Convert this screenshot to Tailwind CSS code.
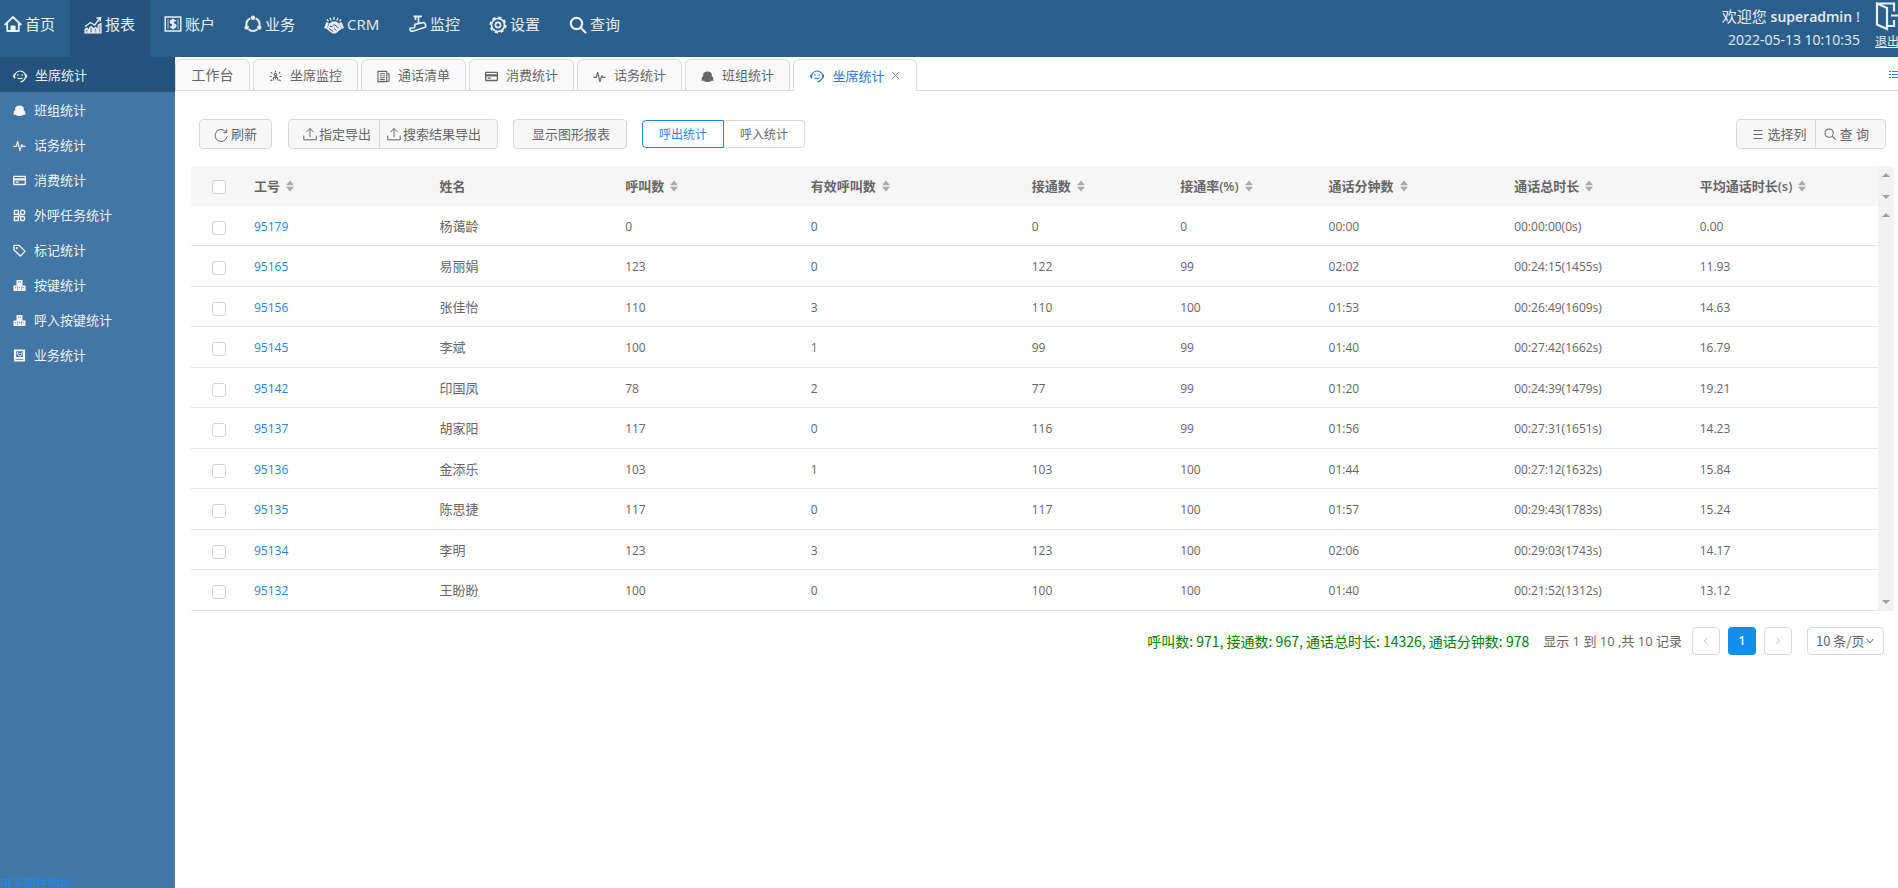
<!DOCTYPE html>
<html lang="zh-CN">
<head>
<meta charset="utf-8">
<meta name="viewport" content="width=device-width, initial-scale=1">
<title>坐席统计</title>
<script src="https://cdn.jsdelivr.net/npm/@tailwindcss/browser@4"></script>
</head>
<body class="h-screen flex flex-col overflow-hidden bg-white text-[13px] leading-5 text-[#666] font-['Open_Sans','Noto_Sans_CJK_SC',sans-serif]">

<svg class="hidden" aria-hidden="true">
  <defs>
    <symbol id="home" viewBox="0 0 18 18" fill="none" stroke="currentColor" stroke-width="1.8" stroke-linejoin="round" stroke-linecap="round"><path d="M1.2 9.500 9 2l7.800 7.500M3.200 8v8h11.600V8"/><path d="M7.300 16v-4.500h3.400V16" fill="currentColor"/></symbol>
    <symbol id="chart" viewBox="0 0 18 18" fill="none" stroke="currentColor"><path d="M1 17v-3.500l1.700-1.500 1.600 1.500V17zM5.500 17v-5l1.700-1.500L8.800 12v5zM10 17v-4.500l1.500-1 1.500 1V17zM14.200 17V9l2.800-1.500V17z" stroke-width="1.200" fill="currentColor" fill-opacity=".55"/><path d="m1 10.500 5.500-4 4.200 2.500 5-6.500M12.500 2.200l4-.7-.3 4" stroke-width="1.400"/></symbol>
    <symbol id="account" viewBox="0 0 18 18" fill="none" stroke="currentColor"><rect x="1.200" y="2" width="15.600" height="14" stroke-width="1.500"/><path d="M4 4v10M14 4v10" stroke-width=".7"/><path d="M11.500 6.300C10.800 4.800 6.600 4.800 6.600 7c0 2.400 5 1.300 5 3.800 0 2.400-4.400 2.200-5.100.5M9 3.800v10.400" stroke-width="1.900"/></symbol>
    <symbol id="ring" viewBox="0 0 18 18" fill="none" stroke="currentColor"><path d="M6.300 3.500a6.600 6.600 0 0 0-3.800 7M4.600 14.300a6.800 6.800 0 0 0 8.800 0M15.500 10.500a6.600 6.600 0 0 0-3.800-7" stroke-width="2"/><g fill="currentColor" stroke="none"><circle cx="9" cy="2.700" r="2.200"/><circle cx="2.700" cy="12.500" r="2.200"/><circle cx="15.300" cy="12.500" r="2.200"/></g></symbol>
    <symbol id="hands" viewBox="0 0 20 18" fill="currentColor"><path d="m0 12 2.500-6 2.300 1L2.600 13zM20 12l-2.500-6-2.300 1 2.200 6zM5.300 7.500 8.500 5.500h3.500l3 2 2.200 5.500-5 4q-2.200 1.200-4.400 0l-5-4z"/><path d="M10 .8v3M6 1.800l1.200 2.600M14 1.800l-1.200 2.600M2.800 3.500l1.700 1.800M17.200 3.500l-1.700 1.800" stroke="currentColor" stroke-width="1.300"/><path d="M6 10.500q2 1 3.800-1.600 1.300-.6 4.900 3.400M5 12.500l4.300 3M10 12.500l2.500 2" fill="none" stroke="#2b5f8b" stroke-width="1"/></symbol>
    <symbol id="camera" viewBox="0 0 18 18" fill="none" stroke="currentColor" stroke-width="1.700" stroke-linejoin="round"><path d="M4.500 1.300h8.500M9.500 1.500v7M6.500 1.500v3.500M5.500 9.300 15 7.500q2 1 1.700 4.500L4 16.200H2.200q-1.600-1.200-1-3.200h3.600q1.700-1 .7-3.700"/></symbol>
    <symbol id="gear" viewBox="0 0 18 18" fill="none" stroke="currentColor"><circle cx="9" cy="9" r="6.500" stroke-width="1.700"/><circle cx="9" cy="9" r="7.800" stroke-width="1.600" stroke-dasharray="3.200 2.926"/><circle cx="9" cy="9" r="2.600" stroke-width="1.700"/></symbol>
    <symbol id="search" viewBox="0 0 18 18" fill="none" stroke="currentColor" stroke-width="2.200" stroke-linecap="round"><circle cx="7.500" cy="7.500" r="5.700"/><path d="m12 12 4.500 4.500"/></symbol>
    <symbol id="agent" viewBox="0 0 14 14" fill="none" stroke="currentColor" stroke-width="1.100"><path d="M2 9.200A5.400 5.400 0 1 1 12.200 9q-.9 3-4.700 4M1.900 5.200Q.6 5.500.6 7.100T2 9.200M12.300 5.200q1.200.3 1.200 1.900T12.200 9.200"/><path d="M4.500 8.700Q7 10.700 9.500 8.700"/><path d="M4.800 5.200v1.500M9.200 5.200v1.500" stroke-width="1.300"/></symbol>
    <symbol id="group" viewBox="0 0 14 14" fill="currentColor"><path d="M3.200 3Q4.500 1.500 7 1.500T10.800 3q1.500 1 .7 3.200 2 1.200 2 5.300h-2.200Q9.800 13 7 13t-4.300-1.500H.5q0-4.100 2-5.300Q1.700 4 3.200 3"/></symbol>
    <symbol id="pulse" viewBox="0 0 14 14" fill="none" stroke="currentColor" stroke-width="1.300" stroke-linejoin="round"><path d="M.5 8h3l1.500-5.500 2.500 10L9.500 6l1 2h3"/></symbol>
    <symbol id="card" viewBox="0 0 14 14"><path fill="currentColor" fill-rule="evenodd" d="M1.200 2h11.600q1.200 0 1.200 1.200v7.600q0 1.200-1.200 1.200H1.200Q0 12 0 10.800V3.200Q0 2 1.200 2m.2 1.200v1.300h11.200V3.200zM1.400 7v3.600h11.200V7zM2.800 8.200h3.400v1.200H2.800z"/></symbol>
    <symbol id="blocks" viewBox="0 0 14 14" fill="none" stroke="currentColor" stroke-width="1.500"><rect x="1.500" y="1.500" width="4.200" height="4.200"/><circle cx="10.300" cy="3.700" r="2.300"/><rect x="1.500" y="8.200" width="4.200" height="4.200"/><rect x="8.200" y="8.200" width="4.200" height="4.200" rx="1"/><path d="M5.500 5.500 8.500 8.500"/></symbol>
    <symbol id="tag" viewBox="0 0 14 14" fill="none" stroke="currentColor" stroke-width="1.400" stroke-linejoin="round"><path d="M1 1.500h5.500l6.500 6.200-5 5.300L1 6.500z"/><circle cx="4" cy="4.400" r=".5"/></symbol>
    <symbol id="keys" viewBox="0 0 14 14" fill="currentColor"><path fill-rule="evenodd" d="M3.800 1h6.400v6h3.300v5.800H.5V7h3.300zM5.500 2.800v1.100h1V2.800zM7.500 2.800v1.100h1V2.800zM2.300 8.800v1.100h1.200V8.800zM6.300 8.800v1.100h1.400V8.800zM10.300 8.800v1.100h1.200V8.800zM4.600 7.500v4.500h.5V7.500zM9 7.500v4.500h.5V7.500z"/></symbol>
    <symbol id="book" viewBox="0 0 14 14"><path fill="currentColor" fill-rule="evenodd" d="M1 .5h12v13H1zM3.500 2.300v6.400h7V2.300zM2.800 10.700v1h8.400v-1z"/><path d="M5 3.500v2l1.500 2h2l1-2v-2M6.200 4.800h1.600" stroke="currentColor" fill="none"/></symbol>
    <symbol id="watch" viewBox="0 0 14 14" fill="none" stroke="currentColor" stroke-width="1.200"><circle cx="7" cy="4.800" r="1.300"/><path d="M4.300 11.500 5 8.500 7 7l2 1.500.7 3M7 7v3M7 .8v1.500M2 2.300l1.500 1.400M12 2.300l-1.500 1.400M.6 7h2.200M11.200 7h2.200M1.500 11.800 3 10.500M12.500 11.800 11 10.500"/></symbol>
    <symbol id="list" viewBox="0 0 14 14" fill="none" stroke="currentColor" stroke-width="1.200"><path d="M1 1.500h9.500v11H1zM10.500 4h2.500v7q0 1.500-2.500 1.500"/><path d="M3 4h5.500M3 6.200h2.500M6.500 6.200h2M3 8.300h5.500M3 10.400h5.500"/></symbol>
    <symbol id="reload" viewBox="0 0 14 14" fill="none" stroke="currentColor" stroke-width="1"><path d="M12.300 4.500A6 6 0 1 0 13 8.500M12.700 1.200v3.500H9.300"/></symbol>
    <symbol id="upload" viewBox="0 0 14 14" fill="none" stroke="currentColor" stroke-width="1"><path d="M.8 8.500v4.300h12.400V8.500M7 10V1.500M3.500 5 7 1.500 10.500 5"/></symbol>
    <symbol id="find" viewBox="0 0 14 14" fill="none" stroke="currentColor" stroke-width="1.200"><circle cx="6" cy="6" r="4.800"/><path d="m9.500 9.500 4 4"/></symbol>
    <symbol id="lines" viewBox="0 0 12 12" fill="none" stroke="currentColor"><path d="M1.500 2.500h9M1.500 6.500h9M1.500 10.500h9"/></symbol>
    <symbol id="sort" viewBox="0 0 8 14" fill="#aaa"><path d="M4 1.500 8 6.200H0zM4 12.500 8 7.800H0z"/></symbol>
    <symbol id="up" viewBox="0 0 8 4" fill="#a0a0a0"><path d="M4 0 8 4H0z"/></symbol>
    <symbol id="down" viewBox="0 0 8 4" fill="#a0a0a0"><path d="M4 4 0 0h8z"/></symbol>
  </defs>
</svg>

<header class="h-[57px] shrink-0 flex bg-[#2b5f8b] text-white/90 text-[15px] overflow-hidden">
  <nav class="flex flex-1 leading-6">
    <a href="#" class="w-[70px] pl-1 pt-3 flex items-start gap-[3px]"><svg class="size-[18px] mt-[3px]"><use href="#home"/></svg>首页</a>
    <a href="#" class="w-20 pl-[14px] pt-3 flex items-start gap-[3px] bg-[#23527c]"><svg class="size-[18px] mt-1"><use href="#chart"/></svg>报表</a>
    <a href="#" class="w-20 pl-[14px] pt-3 flex items-start gap-[3px]"><svg class="size-[18px] mt-[3px]"><use href="#account"/></svg>账户</a>
    <a href="#" class="w-20 pl-[14px] pt-3 flex items-start gap-[3px]"><svg class="size-[18px] mt-[3px]"><use href="#ring"/></svg>业务</a>
    <a href="#" class="w-[85px] pl-[14px] pt-3 flex items-start gap-[3px]"><svg class="w-5 h-[18px] mt-1"><use href="#hands"/></svg>CRM</a>
    <a href="#" class="w-20 pl-[14px] pt-3 flex items-start gap-[3px]"><svg class="size-[18px] mt-[3px]"><use href="#camera"/></svg>监控</a>
    <a href="#" class="w-20 pl-[14px] pt-3 flex items-start gap-[3px]"><svg class="size-[18px] mt-1"><use href="#gear"/></svg>设置</a>
    <a href="#" class="w-20 pl-[14px] pt-3 flex items-start gap-[3px]"><svg class="size-[18px] mt-1"><use href="#search"/></svg>查询</a>
  </nav>
  <div class="text-right leading-6 pt-1 pr-[15px] text-sm">
    <p class="text-[15px]">欢迎您 <b class="font-semibold text-sm">superadmin</b> !</p>
    <p>2022-05-13 10:10:35</p>
  </div>
  <a href="#" class="w-[23px] shrink-0 pt-[2px] text-xs leading-5 whitespace-nowrap underline">
    <svg class="w-8 h-[30px] max-w-none" viewBox="0 0 32 30" fill="none" stroke="currentColor" stroke-width="2.200"><path d="M2 1.500h17v8M19 18v6h-7M2 1.500l10 4.500v21L2 22.500zM30 13.500H16M24 8l6 5.500-6 5.500"/></svg>
    <span class="block">退出</span>
  </a>
</header>

<div class="flex flex-1 min-h-0">
  <aside class="w-[175px] shrink-0 flex flex-col bg-[#4176a5] text-white/95 overflow-hidden">
    <nav>
      <a href="#" class="h-[35px] pl-[13px] flex items-center gap-2 bg-[#23527c]"><svg class="size-[14px] mt-[2px]"><use href="#agent"/></svg>坐席统计</a>
      <a href="#" class="h-[35px] pl-[13px] flex items-center gap-2"><svg class="size-[13px] mt-[2px]"><use href="#group"/></svg>班组统计</a>
      <a href="#" class="h-[35px] pl-[13px] flex items-center gap-2"><svg class="size-[13px] mt-[2px]"><use href="#pulse"/></svg>话务统计</a>
      <a href="#" class="h-[35px] pl-[13px] flex items-center gap-2"><svg class="size-[13px] mt-[2px]"><use href="#card"/></svg>消费统计</a>
      <a href="#" class="h-[35px] pl-[13px] flex items-center gap-2"><svg class="size-[13px] mt-[2px]"><use href="#blocks"/></svg>外呼任务统计</a>
      <a href="#" class="h-[35px] pl-[13px] flex items-center gap-2"><svg class="size-[13px] mt-[2px]"><use href="#tag"/></svg>标记统计</a>
      <a href="#" class="h-[35px] pl-[13px] flex items-center gap-2"><svg class="size-[13px] mt-[2px]"><use href="#keys"/></svg>按键统计</a>
      <a href="#" class="h-[35px] pl-[13px] flex items-center gap-2"><svg class="size-[13px] mt-[2px]"><use href="#keys"/></svg>呼入按键统计</a>
      <a href="#" class="h-[35px] pl-[13px] flex items-center gap-2"><svg class="size-[13px] mt-[2px]"><use href="#book"/></svg>业务统计</a>
    </nav>
    <a href="#" class="mt-auto h-3 text-xs leading-4 text-[#1e88e5] whitespace-nowrap">电子邮件地址</a>
  </aside>

  <main class="flex-1 min-w-0">
    <div class="h-[34px] flex items-stretch pt-[2px] gap-[3px] shadow-[inset_0_-1px_0_#d9d9d9]">
      <button class="w-[75px] rounded-t-md border border-[#d9d9d9] bg-[#fafafa] text-[14px]">工作台</button>
      <button class="w-[105px] rounded-t-md border border-[#d9d9d9] bg-[#fafafa] flex items-center justify-center gap-2"><svg class="size-[13px] mt-[2px]"><use href="#watch"/></svg>坐席监控</button>
      <button class="w-[105px] rounded-t-md border border-[#d9d9d9] bg-[#fafafa] flex items-center justify-center gap-2"><svg class="size-[13px] mt-[2px]"><use href="#list"/></svg>通话清单</button>
      <button class="w-[105px] rounded-t-md border border-[#d9d9d9] bg-[#fafafa] flex items-center justify-center gap-2"><svg class="size-[13px] mt-[2px]"><use href="#card"/></svg>消费统计</button>
      <button class="w-[105px] rounded-t-md border border-[#d9d9d9] bg-[#fafafa] flex items-center justify-center gap-2"><svg class="size-[13px] mt-[2px]"><use href="#pulse"/></svg>话务统计</button>
      <button class="w-[105px] rounded-t-md border border-[#d9d9d9] bg-[#fafafa] flex items-center justify-center gap-2"><svg class="size-[13px] mt-[2px]"><use href="#group"/></svg>班组统计</button>
      <button class="w-[124px] rounded-t-md border border-b-0 border-[#d9d9d9] bg-white text-[#2b7bd3] flex items-center justify-center gap-2"><svg class="size-[14px]"><use href="#agent"/></svg><span class="flex items-center gap-[6px]">坐席统计<svg class="size-[9px] text-[#888]" viewBox="0 0 9 9" stroke="currentColor"><path d="m.8.8 7.400 7.400M8.200.8.800 8.200"/></svg></span></button>
      <button class="ml-auto w-[9px] overflow-hidden text-[#1e88e5]" aria-label="标签列表"><svg class="w-4 h-3 max-w-none" viewBox="0 0 16 12" stroke="currentColor"><path d="M0 2.500h2M3 2.500h13M0 5.500h2M3 5.500h13M0 8.500h2M3 8.500h13"/></svg></button>
    </div>

    <div class="flex items-center pt-7 pl-6 pr-3">
      <button class="h-[30px] px-[14px] flex items-center gap-[3px] rounded border border-[#d9d9d9] bg-[#f7f7f7]"><svg class="size-[14px] mt-[2px]"><use href="#reload"/></svg>刷新</button>
      <div class="ml-4 h-[30px] flex rounded border border-[#d9d9d9] bg-[#f7f7f7]">
        <button class="pl-[14px] pr-2 flex items-center gap-[2px] border-r border-[#d9d9d9]"><svg class="size-[14px]"><use href="#upload"/></svg>指定导出</button>
        <button class="pl-[7px] pr-4 flex items-center gap-[2px]"><svg class="size-[14px]"><use href="#upload"/></svg>搜索结果导出</button>
      </div>
      <button class="ml-[15px] h-[30px] pl-[18px] pr-4 rounded border border-[#d9d9d9] bg-[#f7f7f7]">显示图形报表</button>
      <div class="ml-[15px] flex text-xs">
        <button class="w-[82px] h-7 pt-px rounded-l border border-[#1e88e5] text-[#1e88e5]">呼出统计</button>
        <button class="w-[81px] h-7 pt-px rounded-r border border-l-0 border-[#d9d9d9]">呼入统计</button>
      </div>
      <div class="ml-auto h-[30px] flex rounded border border-[#d9d9d9] bg-[#f7f7f7]">
        <button class="pl-[15px] pr-2 flex items-center gap-1 border-r border-[#d9d9d9]"><svg class="size-3"><use href="#lines"/></svg>选择列</button>
        <button class="pl-2 pr-4 flex items-center gap-1"><svg class="size-3"><use href="#find"/></svg>查 询</button>
      </div>
    </div>

    <div class="mt-[17px] pl-4 pr-1 flex">
      <table class="flex-1 w-full table-fixed border-separate border-spacing-0 text-left">
        <colgroup>
          <col class="w-[55px]"><col class="w-[11%]"><col class="w-[11%]"><col class="w-[11%]"><col class="w-[13.1%]"><col class="w-[8.8%]"><col class="w-[8.8%]"><col class="w-[11%]"><col class="w-[11%]"><col>
        </colgroup>
        <thead class="bg-[#f6f6f6]">
          <tr id="head" class="h-10"></tr>
        </thead>
        <tbody id="rows" class="text-xs"></tbody>
      </table>
      <div class="w-4 shrink-0 flex flex-col items-center bg-[#f1f1f1] rounded-tr" aria-hidden="true">
        <svg class="w-2 h-1 mt-[7px]"><use href="#up"/></svg>
        <svg class="w-2 h-1 mt-[18px]"><use href="#down"/></svg>
        <svg class="w-2 h-1 mt-[14px]"><use href="#up"/></svg>
        <svg class="w-2 h-1 mt-auto mb-[7px]"><use href="#down"/></svg>
      </div>
    </div>

    <div class="mt-4 pr-[14px] flex items-center justify-end">
      <span class="text-[#008000] text-sm leading-5 font-['Noto_Sans_CJK_SC',sans-serif]">呼叫数: 971, 接通数: 967, 通话总时长: 14326, 通话分钟数: 978</span>
      <span class="ml-[14px]">显示 1 到 10 ,共 10 记录</span>
      <button class="ml-[10px] w-7 h-7 rounded border border-[#d9d9d9] flex items-center justify-center text-[#bbb]" aria-label="上一页"><svg class="size-2" viewBox="0 0 8 8" fill="none" stroke="currentColor"><path d="M5.500.8 2.300 4l3.200 3.200"/></svg></button>
      <button class="ml-2 w-7 h-7 rounded bg-[#108ee9] text-white text-xs font-semibold">1</button>
      <button class="ml-2 w-7 h-7 rounded border border-[#d9d9d9] flex items-center justify-center text-[#bbb]" aria-label="下一页"><svg class="size-2" viewBox="0 0 8 8" fill="none" stroke="currentColor"><path d="M2.500.8 5.700 4 2.500 7.200"/></svg></button>
      <label class="relative ml-[15px] flex items-center">
        <select class="appearance-none w-[77px] h-7 pl-2 rounded border border-[#d9d9d9] bg-white text-[13px] font-['Noto_Sans_CJK_SC',sans-serif]" aria-label="每页条数"><option>10 条/页</option></select>
        <svg class="absolute right-[10px] size-2 pointer-events-none" viewBox="0 0 8 8" fill="none" stroke="currentColor"><path d="M.8 2 4 6l3.200-4"/></svg>
      </label>
    </div>
  </main>
</div>

<script>
const heads = ['工号', '姓名', '呼叫数', '有效呼叫数', '接通数', '接通率(%)', '通话分钟数', '通话总时长', '平均通话时长(s)'];
const data = [
  ['95179', '杨蔼龄', '0', '0', '0', '0', '00:00', '00:00:00(0s)', '0.00'],
  ['95165', '易丽娟', '123', '0', '122', '99', '02:02', '00:24:15(1455s)', '11.93'],
  ['95156', '张佳怡', '110', '3', '110', '100', '01:53', '00:26:49(1609s)', '14.63'],
  ['95145', '李斌', '100', '1', '99', '99', '01:40', '00:27:42(1662s)', '16.79'],
  ['95142', '印国凤', '78', '2', '77', '99', '01:20', '00:24:39(1479s)', '19.21'],
  ['95137', '胡家阳', '117', '0', '116', '99', '01:56', '00:27:31(1651s)', '14.23'],
  ['95136', '金添乐', '103', '1', '103', '100', '01:44', '00:27:12(1632s)', '15.84'],
  ['95135', '陈思捷', '117', '0', '117', '100', '01:57', '00:29:43(1783s)', '15.24'],
  ['95134', '李明', '123', '3', '123', '100', '02:06', '00:29:03(1743s)', '14.17'],
  ['95132', '王盼盼', '100', '0', '100', '100', '01:40', '00:21:52(1312s)', '13.12'],
];
const box = label => `<input type="checkbox" aria-label="${label}" class="block ml-[13px] mt-[2px] appearance-none size-[14px] rounded-[3px] border border-[#d4d4d4] bg-white checked:bg-[#108ee9]">`;
document.getElementById('head').innerHTML = `<th class="pl-2">${box('全选')}</th>` + heads.map((h, i) =>
  `<th class="pl-2 font-semibold"><span class="flex items-center gap-[6px]">${h}${i === 1 ? '' : '<svg class="w-2 h-[14px]"><use href="#sort"/></svg>'}</span></th>`).join('');
const cell = 'pl-2 pt-[2px] border-b border-[#e5e5e5]';
document.getElementById('rows').innerHTML = data.map(r =>
  `<tr class="odd:h-10 even:h-[41px]"><td class="${cell}">${box(r[0])}</td>` + r.map((c, i) =>
    i === 0 ? `<td class="${cell}"><a href="#" class="text-[#1e88e5]">${c}</a></td>` :
    i === 1 ? `<td class="${cell} text-[13px]">${c}</td>` : `<td class="${cell}">${c}</td>`).join('') + '</tr>').join('');
</script>
</body>
</html>
